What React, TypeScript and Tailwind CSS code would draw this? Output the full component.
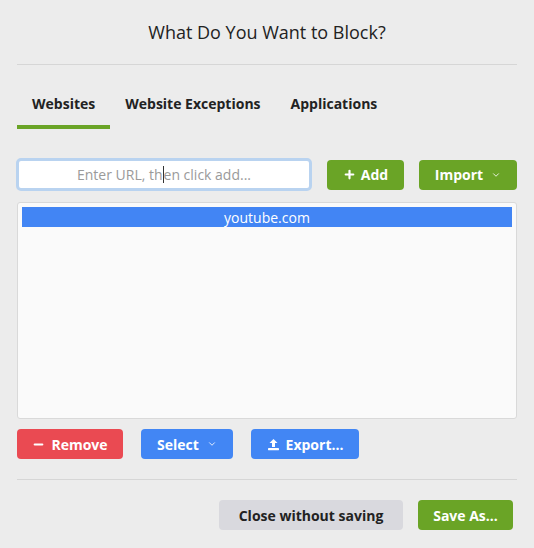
import { Plus, Minus, ChevronDown } from "lucide-react";

function UploadIcon() {
  return (
    <svg width="13" height="13" viewBox="0 0 13 13" fill="currentColor">
      <path d="M6.5 1 L10.5 5 H8 V9 H5 V5 H2.5 Z" />
      <rect x="1" y="10" width="11" height="2.2" rx="0.4" />
    </svg>
  );
}

export default function App() {
  const tabs = ["Websites", "Website Exceptions", "Applications"];
  return (
    <div
      className="h-[548px] w-[534px] bg-[#ececec] px-[17px] text-[#222]"
      style={{ fontFamily: '"Open Sans", "Noto Sans", sans-serif' }}
    >
      <div className="flex h-[64px] items-center justify-center text-[18px] text-[#222]">
        What Do You Want to Block?
      </div>
      <div className="h-px bg-[#d6d6d6]" />

      {/* Tabs */}
      <div className="mt-[28px] flex">
        {tabs.map((t, i) => (
          <div
            key={t}
            className={
              "px-[15px] pb-[11px] text-[14px] font-bold text-[#222] " +
              (i === 0 ? "border-b-4 border-[#6aa426]" : "border-b-4 border-transparent")
            }
          >
            {t}
          </div>
        ))}
      </div>

      {/* Input row */}
      <div className="mt-[29px] flex items-center">
        <div className="-ml-px h-[33px] w-[296px] rounded-[5px] border-[3px] border-[#b9d3f0] bg-white">
          <div className="flex h-full items-center justify-center text-[14px] text-[#9a9a9a]">
            Enter URL, th
            <span className="inline-block h-[17px] w-px bg-[#333]" />
            en click add...
          </div>
        </div>
        <button className="ml-[15px] flex h-[30px] w-[77px] items-center justify-center gap-[5px] rounded-[4px] bg-[#6aa426] text-[14px] font-bold text-white">
          <Plus size={13} strokeWidth={4} />
          Add
        </button>
        <button className="ml-[15px] flex h-[30px] w-[98px] items-center justify-center gap-[8px] rounded-[4px] bg-[#6aa426] text-[14px] font-bold text-white">
          Import
          <ChevronDown size={10} strokeWidth={2} />
        </button>
      </div>

      {/* List */}
      <div className="mt-[11px] h-[217px] rounded-[3px] border border-[#d9d9d9] bg-[#fafafa] p-[4px]">
        <div className="flex h-[20px] items-center justify-center bg-[#4285f4] text-[14px] text-white">
          youtube.com
        </div>
      </div>

      {/* Actions */}
      <div className="mt-[10px] flex">
        <button className="flex h-[30px] w-[106px] items-center justify-center gap-[6px] rounded-[4px] bg-[#ea4a52] text-[14px] font-bold text-white">
          <Minus size={13} strokeWidth={4} />
          Remove
        </button>
        <button className="ml-[18px] flex h-[30px] w-[92px] items-center justify-center gap-[8px] rounded-[4px] bg-[#4286f4] text-[14px] font-bold text-white">
          Select
          <ChevronDown size={10} strokeWidth={2} />
        </button>
        <button className="ml-[18px] flex h-[30px] w-[108px] items-center justify-center gap-[6px] rounded-[4px] bg-[#4286f4] text-[14px] font-bold text-white">
          <UploadIcon />
          Export...
        </button>
      </div>

      <div className="mt-[20px] h-px bg-[#d6d6d6]" />

      <div className="mt-[20px] flex justify-end pr-[4px]">
        <button className="flex h-[30px] w-[184px] items-center justify-center rounded-[4px] bg-[#d9d9de] text-[14px] font-bold text-[#222]">
          Close without saving
        </button>
        <button className="ml-[15px] flex h-[30px] w-[95px] items-center justify-center rounded-[4px] bg-[#6aa426] text-[14px] font-bold text-white">
          Save As...
        </button>
      </div>
    </div>
  );
}
